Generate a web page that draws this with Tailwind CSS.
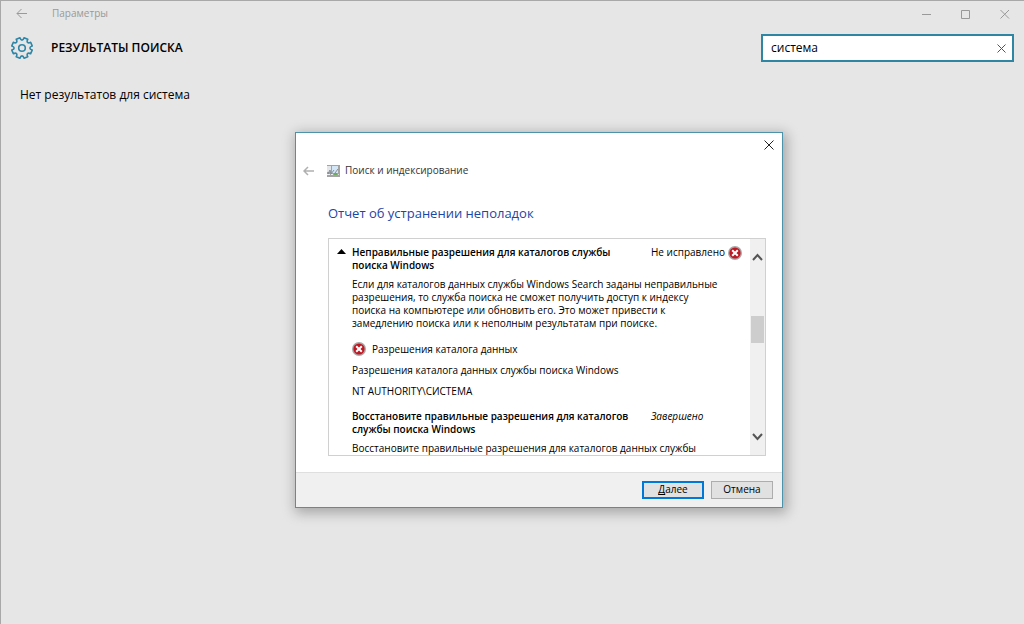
<!DOCTYPE html>
<html lang="ru">
<head>
<meta charset="utf-8">
<title>Параметры</title>
<script src="https://cdn.jsdelivr.net/npm/@tailwindcss/browser@4"></script>
</head>
<body class="relative flex min-h-screen flex-col border-t border-l border-[#a8a8a8] bg-[#e6e6e6] font-['Open_Sans','Noto_Sans',sans-serif] text-black">
<header class="flex h-[26px] items-center pb-[1px] pl-[15px] text-[#999999]">
  <button type="button" aria-label="Назад" class="w-[36px]"><svg class="h-[11px] w-[11px]" viewBox="0 0 11 11" fill="none" stroke="currentColor"><path d="M11 5.5H1M5.500 1L1 5.500l4.500 4.500"/></svg></button>
  <span class="text-[10px]">Параметры</span>
  <div class="ml-auto flex items-center gap-[29px] pr-[14px]">
    <button type="button" aria-label="Свернуть"><svg class="h-[10px] w-[10px]" viewBox="0 0 10 10" stroke="currentColor"><path d="M0 5.500h9"/></svg></button>
    <button type="button" aria-label="Развернуть"><svg class="h-[10px] w-[10px]" viewBox="0 0 10 10" fill="none" stroke="currentColor"><path d="M.5 1.500h8v8h-8z"/></svg></button>
    <button type="button" aria-label="Закрыть"><svg class="h-[10px] w-[10px]" viewBox="0 0 10 10" stroke="currentColor"><path d="M.5 1l8.500 8.500M9 1L.5 9.500"/></svg></button>
  </div>
</header>
<div class="flex h-[42px] items-center pr-[10px] pl-[10px]">
  <svg class="h-[22px] w-[22px]" viewBox="-11 -11 22 22" fill="none" stroke="#2f86a6" stroke-width="1.600" stroke-linejoin="round"><path d="M2.07-10.190L5.740-8.670C4.230-5.820 5.820-4.230 8.670-5.740L10.190-2.070C7.110-1.130 7.110 1.130 10.190 2.070L8.670 5.740C5.820 4.230 4.230 5.820 5.740 8.670L2.070 10.190C1.130 7.110-1.130 7.110-2.070 10.190L-5.740 8.670C-4.230 5.820-5.820 4.230-8.670 5.740L-10.190 2.070C-7.110 1.130-7.110-1.130-10.190-2.070L-8.670-5.740C-5.820-4.230-4.230-5.820-5.740-8.670L-2.070-10.190C-1.130-7.110 1.130-7.110 2.070-10.190z"/><circle r="3.300"/></svg>
  <h1 class="ml-[18px] text-[12px] font-semibold">РЕЗУЛЬТАТЫ ПОИСКА</h1>
  <div class="ml-auto flex h-[28px] w-[253px] items-center border-2 border-[#2f86a3] bg-white pr-[6px] pl-2">
    <input type="text" aria-label="Поиск параметров" value="система" class="min-w-0 flex-1 text-[12px] outline-none">
    <button type="button" aria-label="Очистить" class="text-[#555]"><svg class="block h-[9px] w-[9px]" viewBox="0 0 9 9" stroke="currentColor"><path d="M.5.5l8 8M8.500.5l-8 8"/></svg></button>
  </div>
</div>
<p class="mt-4 pl-[19px] text-[12px] leading-5">Нет результатов для система</p>

<section role="dialog" aria-labelledby="wizard" class="absolute top-[131px] left-[294px] flex w-[488px] flex-col border border-[#4a93ab] bg-white text-[10px] leading-[13px] shadow-[2px_3px_12px_2px_rgba(0,0,0,0.28)]">
  <div class="flex h-[24px] items-center justify-end pr-[8px]">
    <button type="button" aria-label="Закрыть"><svg class="h-[10px] w-[10px]" viewBox="0 0 10 10" stroke="#222"><path d="M.5.5l9 9M9.500.5l-9 9"/></svg></button>
  </div>
  <div class="flex h-[28px] items-center pb-[1px] pl-[7px]">
    <button type="button" aria-label="Назад" class="w-[24px] text-[#b0b0b0]"><svg class="h-[10px] w-[11px]" viewBox="0 0 11 10" fill="none" stroke="currentColor" stroke-width="1.500"><path d="M11 5H1M5 1L1 5l4 4"/></svg></button>
    <svg class="mr-[5px] h-[12px] w-[13px]" viewBox="0 0 13 12"><path fill="#a3a3a3" d="M0 0h13v12H0z"/><path fill="#e3e6ea" d="M0 1h4v6H0z"/><path fill="#d3e6f8" d="M5 1h6v7H5z"/><path fill="none" stroke="#858c94" d="M1 9l2-4 1 4 3-4M8 8l3-4"/><path fill="#eef2f6" d="M0 9h3v1H0zM4 9h2v1H4z"/><path fill="#70a860" d="M7 8h3v2H7z"/><path fill="#ddd" d="M11 9h1v1h-1z"/></svg>
    <span id="wizard" class="text-[#333]">Поиск и индексирование</span>
  </div>
  <div class="pr-[16px] pb-[16px] pl-[32px]">
    <h2 class="mt-[18px] text-[13px] leading-5 text-[#1c45a8]">Отчет об устранении неполадок</h2>
    <div class="mt-[15px] flex h-[218px] overflow-hidden border border-[#d0d0d0]">
      <div class="min-w-0 flex-1 pt-[7px] pl-[8px]">
        <div class="flex">
          <button type="button" aria-label="Свернуть раздел" class="flex w-[15px] shrink-0 pt-[3px]"><svg class="h-[5px] w-[9px]" viewBox="0 0 9 5"><path d="M0 5l4.500-5L9 5z"/></svg></button>
          <h3 class="font-semibold whitespace-nowrap">Неправильные разрешения для каталогов службы<br>поиска Windows</h3>
          <span class="ml-auto flex h-[13px] w-[99px] items-center gap-[3px] whitespace-nowrap">Не исправлено
            <svg class="h-[14px] w-[14px]" viewBox="0 0 14 14"><circle cx="7" cy="7" r="7" fill="#a8a8a8"/><circle cx="7" cy="7" r="5.600" fill="#c01822"/><path d="M4.200 4.200l5.600 5.600M9.800 4.200L4.200 9.800" stroke="#fff" stroke-width="2"/></svg></span>
        </div>
        <div class="pl-[15px] whitespace-nowrap">
          <p class="mt-[6px]">Если для каталогов данных службы Windows Search заданы неправильные<br>разрешения, то служба поиска не сможет получить доступ к индексу<br>поиска на компьютере или обновить его. Это может привести к<br>замедлению поиска или к неполным результатам при поиске.</p>
          <p class="mt-[12px] flex items-center gap-[6px]"><svg class="h-[14px] w-[14px]" viewBox="0 0 14 14"><circle cx="7" cy="7" r="7" fill="#a8a8a8"/><circle cx="7" cy="7" r="5.600" fill="#c01822"/><path d="M4.200 4.200l5.600 5.600M9.800 4.200L4.200 9.800" stroke="#fff" stroke-width="2"/></svg>Разрешения каталога данных</p>
          <p class="mt-[8px]">Разрешения каталога данных службы поиска Windows</p>
          <p class="mt-[8px]">NT AUTHORITY\СИСТЕМА</p>
          <div class="mt-[12px] flex">
            <h3 class="font-semibold">Восстановите правильные разрешения для каталогов<br>службы поиска Windows</h3>
            <i class="ml-auto w-[99px]">Завершено</i>
          </div>
          <p class="mt-[6px]">Восстановите правильные разрешения для каталогов данных службы</p>
        </div>
      </div>
      <div class="flex w-[15px] flex-col items-center bg-[#f0f0f0] py-[14px]">
        <button type="button" aria-label="Прокрутить вверх"><svg class="block h-[8px] w-[11px]" viewBox="0 0 11 8" fill="none" stroke="#555" stroke-width="2"><path d="M1 7l4.500-5L10 7"/></svg></button>
        <div class="mt-[55px] h-[27px] w-[13px] bg-[#cdcdcd]"></div>
        <button type="button" aria-label="Прокрутить вниз" class="mt-auto"><svg class="block h-[8px] w-[11px]" viewBox="0 0 11 8" fill="none" stroke="#555" stroke-width="2"><path d="M1 1l4.500 5L10 1"/></svg></button>
      </div>
    </div>
  </div>
  <footer class="flex h-[35px] items-center justify-end gap-[7px] border-t border-[#dfdfdf] bg-[#f0f0f0] pr-[9px] pb-[1px]">
    <button type="button" class="flex h-[18px] w-[62px] items-center justify-center border-2 border-[#0078d7] bg-[#e1e1e1]"><u class="[text-decoration-skip-ink:none]">Д</u>алее</button>
    <button type="button" class="flex h-[18px] w-[62px] items-center justify-center border border-[#adadad] bg-[#e1e1e1]">Отмена</button>
  </footer>
</section>
</body>
</html>
